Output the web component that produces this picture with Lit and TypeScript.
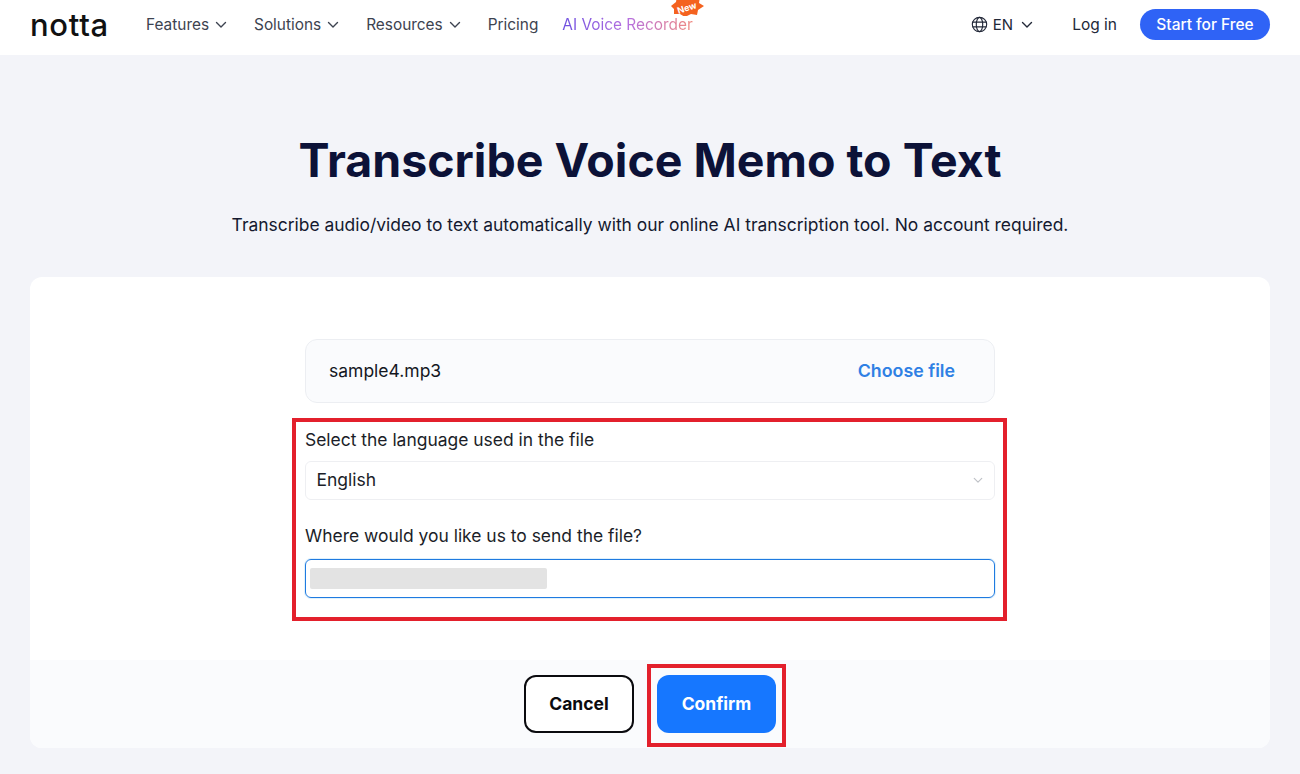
import { LitElement, html, css, svg } from "lit";
import { customElement } from "lit/decorators.js";

const chev = (cls: string) => html`<svg class=${cls} viewBox="0 0 12 8" fill="none" stroke="currentColor" stroke-width="1.4" stroke-linecap="round" stroke-linejoin="round"><path d="M1.5 1.5 6 6l4.5-4.5"/></svg>`;

@customElement("app-root")
export class AppRoot extends LitElement {
  static styles = css`
    :host { display: block; width: 1300px; height: 774px; overflow: hidden; background: #f3f4f9; font-family: Inter, "Noto Sans", sans-serif; color: #0f1430; }
    * { box-sizing: border-box; }
    header { height: 55px; background: #fff; display: flex; align-items: center; padding: 0 30px 6px; }
    .logo { width: 116px; font-family: Inter, sans-serif; font-weight: 500; font-size: 31px; letter-spacing: 0.7px; color: #111; line-height: 1; }
    nav { display: flex; align-items: center; font-size: 15.4px; color: #3d4350; }
    .item { display: flex; align-items: center; gap: 6px; margin-right: 27px; }
    .chev { width: 12px; height: 8px; color: #3d4350; }
    .recorder { position: relative; background: linear-gradient(90deg, #6d4fe0 0%, #b56fe0 50%, #f08a80 100%); -webkit-background-clip: text; background-clip: text; color: transparent; margin-left: -3px; }
    .badge { position: absolute; left: 107px; top: -21px; width: 36px; height: 22px; }
    .badge-text { position: absolute; left: 115px; top: -12px; font-size: 9px; font-weight: 700; color: #fff; transform: rotate(-18deg); line-height: 10px; }
    .right { margin-left: auto; display: flex; align-items: center; font-size: 15.5px; color: #222838; }
    .lang { display: flex; align-items: center; gap: 5px; margin-right: 39px; font-size: 15px; }
    .globe { width: 17px; height: 17px; color: #222838; }
    .lang .chev { margin-left: 3px; color: #222838; }
    .login { margin-right: 23px; }
    .start { width: 130px; height: 31px; border-radius: 16px; background: #2f63f6; color: #fff; display: flex; align-items: center; justify-content: center; font-weight: 500; font-size: 15.5px; }
    h1 { margin: 76px 0 0; text-align: center; font-size: 46.5px; line-height: 58px; font-weight: 700; color: #0c1238; }
    .sub { margin: 24px 0 0; text-align: center; font-size: 17.44px; line-height: 24px; color: #14192f; }
    .card { margin: 40px 30px 0; height: 471px; background: #fff; border-radius: 12px; overflow: hidden; display: flex; flex-direction: column; align-items: center; padding-top: 62px; }
    .file { width: 690px; height: 64px; border: 1px solid #eceef2; border-radius: 12px; background: #fafbfd; display: flex; align-items: center; justify-content: space-between; padding: 0 39px 2px 23px; font-size: 17.5px; color: #14171f; }
    .choose { font-weight: 600; color: #2f80e4; font-size: 17.8px; }
    .red { border: 4px solid #e3202c; }
    .form { width: 715px; height: 203px; margin: 15px 1px 0 0; padding: 7px 8px 0 9px; font-size: 17.45px; color: #1b1e28; }
    .label { line-height: 22px; }
    .select { height: 39px; margin-top: 10px; border: 1px solid #eeeff2; border-radius: 6px; display: flex; align-items: center; justify-content: space-between; padding: 0 11px 2px 10.5px; font-size: 17.5px; }
    .sel-chev { width: 10px; height: 7px; color: #bfc2c7; margin-top: 2px; }
    .label.two { margin-top: 25px; }
    .input { height: 39px; margin-top: 12px; border: 1px solid #1f7ae0; border-radius: 6px; box-shadow: 0 0 0 1px #dff1fc; display: flex; align-items: center; padding-left: 4px; }
    .blur { width: 237px; height: 21px; background: #e3e3e3; border-radius: 2px; }
    .foot { margin-top: auto; width: 100%; height: 88px; background: #fafbfd; display: flex; justify-content: center; padding: 4px 0 0 10px; }
    .btn { height: 58px; border-radius: 12px; display: flex; align-items: center; justify-content: center; padding-bottom: 2px; font-weight: 700; font-size: 17.5px; }
    .cancel { width: 110px; margin-top: 11px; margin-right: 13px; background: #fff; border: 2px solid #0b0b0f; color: #0b0b0f; }
    .confirm-wrap { width: 139px; height: 83px; padding: 7px 6px; }
    .confirm { width: 119px; background: #1677ff; color: #fff; }
  `;

  render() {
    return html`
      <header>
        <div class="logo">notta</div>
        <nav>
          <div class="item">Features ${chev("chev")}</div>
          <div class="item">Solutions ${chev("chev")}</div>
          <div class="item">Resources ${chev("chev")}</div>
          <div class="item">Pricing</div>
          <div class="item recorder">AI Voice Recorder
            <svg class="badge" viewBox="0 0 36 22"><path d="M2 12 7 8 8 2l6 2 6-3 4 3 7-1-1 6 5 3-6 4-1 5-6-1-6 3-5-3-6 0 0-5z" fill="#f4621f"/></svg>
            <span class="badge-text">New</span>
          </div>
        </nav>
        <div class="right">
          <div class="lang">
            <svg class="globe" viewBox="0 0 18 18" fill="none" stroke="currentColor" stroke-width="1.2">${svg`<circle cx="9" cy="9" r="7.6"/><ellipse cx="9" cy="9" rx="3.4" ry="7.6"/><path d="M1.6 6.5h14.8M1.6 11.5h14.8"/>`}</svg>
            EN ${chev("chev")}
          </div>
          <div class="login">Log in</div>
          <div class="start">Start for Free</div>
        </div>
      </header>
      <h1>Transcribe Voice Memo to Text</h1>
      <p class="sub">Transcribe audio/video to text automatically with our online AI transcription tool. No account required.</p>
      <section class="card">
        <div class="file"><span>sample4.mp3</span><span class="choose">Choose file</span></div>
        <div class="form red">
          <div class="label">Select the language used in the file</div>
          <div class="select"><span>English</span>${chev("sel-chev")}</div>
          <div class="label two">Where would you like us to send the file?</div>
          <div class="input"><div class="blur"></div></div>
        </div>
        <div class="foot">
          <div class="btn cancel">Cancel</div>
          <div class="confirm-wrap red"><div class="btn confirm">Confirm</div></div>
        </div>
      </section>
    `;
  }
}
